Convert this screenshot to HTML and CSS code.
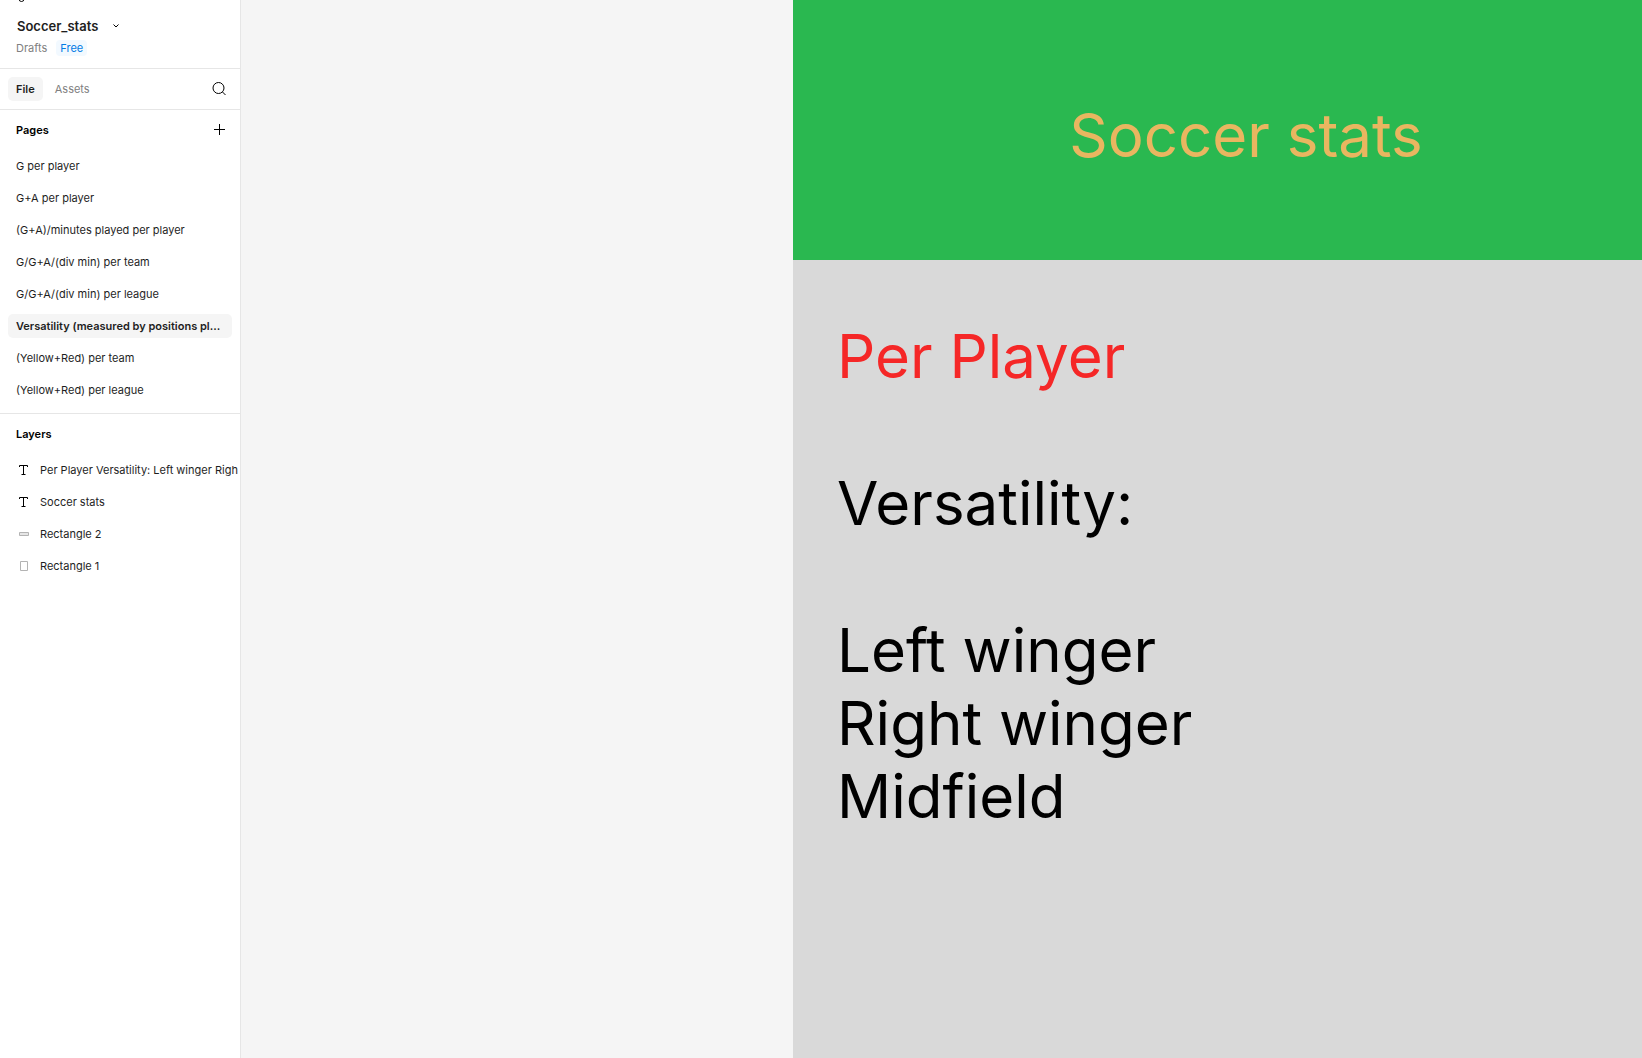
FILE: index.html
```html
<!DOCTYPE html>
<html lang="en">
<head>
<meta charset="utf-8">
<title>Soccer_stats</title>
<link rel="stylesheet" href="styles.css">
</head>
<body>
<div class="app">
  <aside class="sidebar">
    <header class="file-head">
      <button class="icon-btn menu-btn" aria-label="Main menu">
        <svg width="24" height="24" viewBox="0 0 24 24" fill="none" stroke="#000"><path d="M12 7.500H9.500a2.500 2.500 0 0 0 0 5H12zM12 7.500h2.500a2.500 2.500 0 0 1 0 5H12zM12 12.500H9.500a2.500 2.500 0 0 0 0 5H12zM14.500 12.500a2.500 2.500 0 1 1 0 5 2.500 2.500 0 0 1 0-5zM9.500 17.500a2.500 2.500 0 1 0 2.500 2.500v-2.500z"/></svg>
      </button>
      <button class="file-name">
        <span>Soccer_stats</span>
        <svg width="8" height="8" viewBox="0 0 8 8" fill="none" stroke="#000"><path d="M1.500 2.500L4 5l2.500-2.500"/></svg>
      </button>
      <div class="file-meta">
        <a class="drafts" href="#drafts">Drafts</a>
        <a class="badge" href="#plan">Free</a>
      </div>
    </header>
    <nav class="tabs">
      <button class="tab tab-active">File</button>
      <button class="tab">Assets</button>
      <button class="icon-btn tabs-search" aria-label="Search">
        <svg width="24" height="24" viewBox="0 0 24 24" fill="none" stroke="#000"><circle cx="11.500" cy="11" r="5.500"/><path d="M15.500 15l3 3"/></svg>
      </button>
    </nav>
    <section class="panel pages">
      <div class="panel-head">
        <h2>Pages</h2>
        <button class="icon-btn" aria-label="Add page">
          <svg width="24" height="24" viewBox="0 0 24 24" fill="none" stroke="#000"><path d="M12.500 6v11M7 11.500h11"/></svg>
        </button>
      </div>
      <ul class="rows">
        <li><button class="row">G per player</button></li>
        <li><button class="row">G+A per player</button></li>
        <li><button class="row">(G+A)/minutes played per player</button></li>
        <li><button class="row">G/G+A/(div min) per team</button></li>
        <li><button class="row">G/G+A/(div min) per league</button></li>
        <li><button class="row row-active">Versatility (measured by positions pl...</button></li>
        <li><button class="row">(Yellow+Red) per team</button></li>
        <li><button class="row">(Yellow+Red) per league</button></li>
      </ul>
    </section>
    <section class="panel layers">
      <div class="panel-head"><h2>Layers</h2></div>
      <ul class="rows">
        <li><button class="layer">
          <svg width="16" height="16" viewBox="0 0 16 16" fill="none" stroke="#000"><path d="M3.500 5V3.500h8V5M7.500 3.500v9M5.500 12.500h4"/></svg>
          <span>Per Player Versatility: Left winger Righ</span></button></li>
        <li><button class="layer">
          <svg width="16" height="16" viewBox="0 0 16 16" fill="none" stroke="#000"><path d="M3.500 5V3.500h8V5M7.500 3.500v9M5.500 12.500h4"/></svg>
          <span>Soccer stats</span></button></li>
        <li><button class="layer">
          <svg width="16" height="16" viewBox="0 0 16 16" fill="#e6e6e6" stroke="#b3b3b3"><path d="M3.500 6.500h9v3h-9z"/></svg>
          <span>Rectangle 2</span></button></li>
        <li><button class="layer">
          <svg width="16" height="16" viewBox="0 0 16 16" fill="none" stroke="#b3b3b3"><path d="M4.500 3.500h7v9h-7z"/></svg>
          <span>Rectangle 1</span></button></li>
      </ul>
    </section>
  </aside>
  <main class="canvas">
    <article class="artboard">
      <h1 class="banner">Soccer stats</h1>
      <div class="content">
        <p class="accent">Per Player</p>
        <p>Versatility:</p>
        <p>Left winger<br>Right winger<br>Midfield</p>
      </div>
    </article>
  </main>
</div>
</body>
</html>
```
FILE: styles.css
```css
* { box-sizing: border-box; }
body {
  margin: 0;
  font: 11px/16px Inter, sans-serif;
  color: #1e1e1e;
}
h1, h2, p, ul { margin: 0; padding: 0; font-weight: 400; }
ul { list-style: none; }
a { text-decoration: none; }
svg { display: block; flex: none; }
button {
  margin: 0;
  padding: 0;
  border: 0;
  background: none;
  color: inherit;
  font: inherit;
  text-align: left;
}
.app { display: flex; height: 100vh; overflow: hidden; }

.sidebar {
  flex: none;
  width: 241px;
  border-right: 1px solid #e6e6e6;
  background: #fff;
  overflow: hidden;
}
.icon-btn { width: 24px; height: 24px; }
.file-head {
  display: flow-root;
  height: 69px;
  padding: 0 16px;
  border-bottom: 1px solid #e6e6e6;
}
.menu-btn { display: block; margin: -21px 0 11px -4px; }
.file-name {
  display: flex;
  align-items: center;
  gap: 14px;
  padding-left: 1px;
  height: 24px;
  font-size: 13px;
  font-weight: 600;
}
.file-meta { display: flex; align-items: center; gap: 9px; margin-top: 2px; }
.drafts { color: #808080; }
.badge {
  padding: 0 4px;
  border-radius: 4px;
  background: #f2f9ff;
  color: #007be5;
}
.tabs {
  display: flex;
  align-items: center;
  gap: 4px;
  height: 41px;
  padding: 0 9px 0 8px;
  border-bottom: 1px solid #e6e6e6;
}
.tab {
  height: 24px;
  padding: 0 8px;
  border-radius: 5px;
  color: #808080;
}
.tab-active { background: #f5f5f5; color: #1e1e1e; font-weight: 600; }
.tabs-search { margin-left: auto; }

.panel-head {
  display: flex;
  align-items: center;
  justify-content: space-between;
  height: 40px;
  padding: 0 9px 0 16px;
}
.panel-head h2 { font-size: 11px; font-weight: 600; color: #000; }
.pages { padding-bottom: 7px; border-bottom: 1px solid #e6e6e6; }
.rows {
  display: grid;
  grid-template-columns: minmax(0, 1fr);
  gap: 8px;
  padding: 4px 8px;
}
.row {
  display: block;
  width: 100%;
  height: 24px;
  padding: 0 8px;
  border-radius: 5px;
  overflow: hidden;
  white-space: nowrap;
  text-overflow: ellipsis;
}
.row-active { background: #f5f5f5; font-weight: 600; }
.layer {
  display: flex;
  align-items: center;
  gap: 8px;
  height: 24px;
  padding-left: 8px;
  white-space: nowrap;
}

.canvas {
  flex: 1;
  min-width: 0;
  display: flex;
  padding-left: 552px;
  background: #f5f5f5;
  overflow: hidden;
}
.artboard { flex: 1 0 906px; background: #d9d9d9; font-size: 60px; line-height: 73px; }
.banner {
  height: 260px;
  padding-top: 99px;
  background: #2ab850;
  color: #e9b660;
  font-size: 60px;
  text-align: center;
}
.content { display: grid; gap: 74px; padding: 60px 44px; color: #000; }
.accent { color: #f52727; }
```
